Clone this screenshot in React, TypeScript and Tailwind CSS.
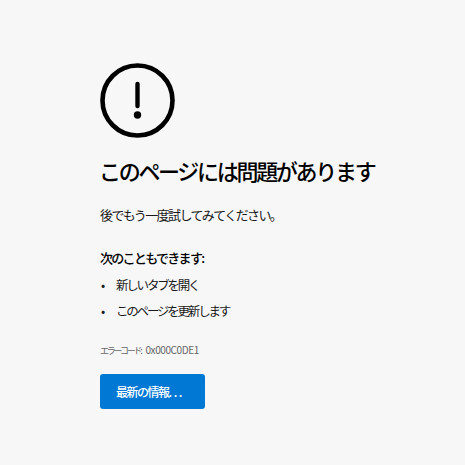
import React from 'react';

const ErrorIcon = () => (
  <svg width="75" height="75" viewBox="0 0 75 75" fill="none" className="block">
    <circle cx="37.5" cy="37.5" r="35" stroke="#000" strokeWidth="4.6" />
    <path d="M37.5 21V43" stroke="#000" strokeWidth="4.4" strokeLinecap="round" />
    <circle cx="37.5" cy="52" r="3.7" fill="#000" />
  </svg>
);

export default function App() {
  return (
    <div className="w-[465px] h-[465px] bg-[#f7f7f7] pt-[63px] pl-[100px] text-black overflow-hidden font-['Noto_Sans_CJK_JP','Open_Sans',sans-serif]">
      <ErrorIcon />
      <h1 className="mt-[14px] -ml-[1px] text-[22px] leading-[36px] font-medium tracking-[-2.3px] whitespace-nowrap">このページには問題があります</h1>
      <p className="mt-[17px] text-[13px] leading-[20px] tracking-[-1.6px] text-[#1a1a1a] whitespace-nowrap">後でもう一度試してみてください。</p>
      <p className="mt-[23px] text-[13px] leading-[20px] font-medium tracking-[-1.7px] whitespace-nowrap">次のこともできます:</p>
      <ul className="mt-[4px] text-[12.5px] tracking-[-2.2px] text-[#1a1a1a]">
        <li className="flex h-[26px] items-center whitespace-nowrap">
          <span className="w-[16px] pl-[1px]">•</span>新しいタブを開く
        </li>
        <li className="flex h-[26px] items-center whitespace-nowrap">
          <span className="w-[16px] pl-[1px]">•</span>このページを更新します
        </li>
      </ul>
      <p className="mt-[19px] h-[14px] text-[10px] leading-[14px] text-[#666] whitespace-nowrap">
        <span className="text-[9px] tracking-[-2.3px]">エラーコード:</span>
        <span className="ml-[5px] tracking-[-0.4px]">0x000C0DE1</span>
      </p>
      <button className="mt-[17px] block w-[105px] h-[35px] rounded-[3px] bg-[#0078d4] text-white text-[12px] font-medium text-left pl-[16px] tracking-[-1.5px] whitespace-nowrap">
        最新の情報<span className="tracking-[1.6px]">...</span>
      </button>
    </div>
  );
}
